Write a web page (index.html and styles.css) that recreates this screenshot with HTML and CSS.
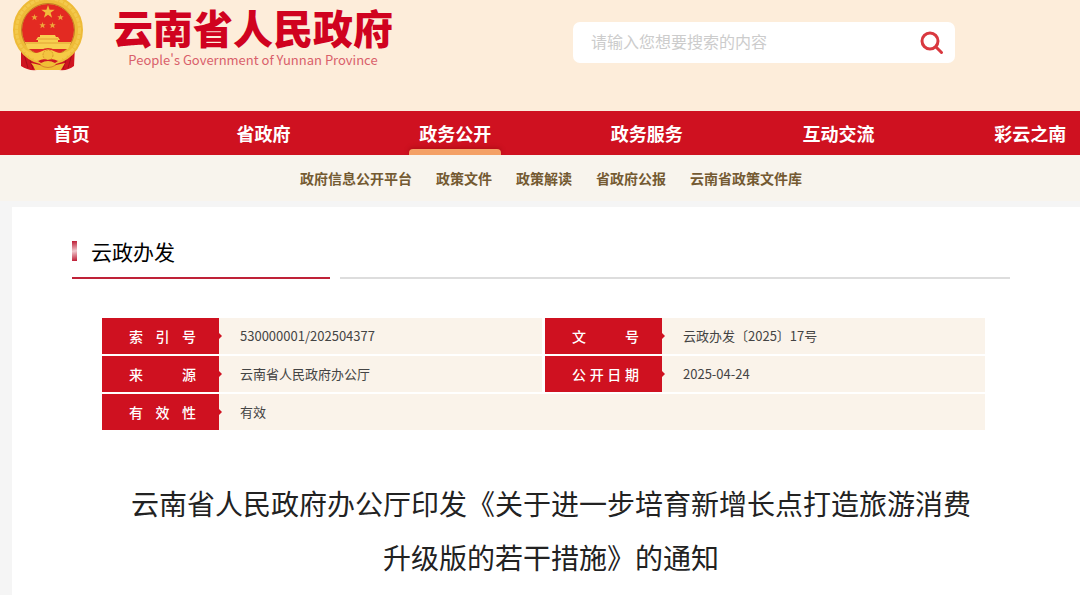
FILE: index.html
```html
<!DOCTYPE html>
<html lang="zh-CN">
<head>
    <meta charset="UTF-8">
    <meta name="viewport" content="width=device-width, initial-scale=1.0">
    <title>云南省人民政府</title>
    <link rel="stylesheet" href="styles.css">
</head>
<body>

<div class="page">
    <header class="header">
        <a class="logo" href="#">
            <svg class="emblem" viewBox="0 0 72 72" aria-hidden="true">
                <path d="M9 46 Q15 54 26 58 L25 70 Q16 71 9 66 Z M63 46 Q57 54 46 58 L47 70 Q56 71 62 66 Z" fill="#cf1420"/>
                <path d="M12 54 L16 68 M60 54 L56 68 M17 57 L21 69 M55 57 L51 69" stroke="#a90f18" stroke-width="1"/>
                <path d="M25 56 H47 V70 H25 Z" fill="#cf1420"/>
                <circle cx="36" cy="30" r="30.500" fill="#e32a22" stroke="#eebb38" stroke-width="9"/>
                <circle cx="36" cy="30" r="31.500" fill="none" stroke="#f5cf55" stroke-width="3" stroke-dasharray="4 1" opacity="0.7"/>
                <circle cx="36" cy="30" r="26.500" fill="none" stroke="#c47a24" stroke-width="1"/>
                <path d="M36 5 L37.600 9.800 L42.700 9.800 L38.600 12.800 L40.100 17.700 L36 14.700 L31.900 17.700 L33.400 12.800 L29.300 9.800 L34.400 9.800 Z" fill="#f2bb3c"/>
                <g fill="#eda53a">
                    <path id="star" d="M22.500 14 L23.300 16.200 L25.700 16.200 L23.900 17.700 L24.500 20.200 L22.500 18.800 L20.400 20.200 L21.100 17.700 L19.300 16.200 L21.700 16.200 Z"/>
                    <use href="#star" x="26"/>
                    <use href="#star" x="8" y="8"/>
                    <use href="#star" x="18" y="8"/>
                </g>
                <path d="M28 35 H43 L44 37 H46 L48 40 H46 V42 H59 Q58 46 56 49 H16 Q14 46 13 42 H26 V40 H24 L26 37 H28 Z" fill="#f8cf50"/>
                <path d="M26 39 H46 M14 43 H58" stroke="#e2a334" stroke-width="1"/>
                <path d="M11 48 Q20 55 28 52 Q36 47 44 52 Q52 55 61 48 Q56 58 45 60 Q36 57 27 60 Q16 58 11 48 Z" fill="#f6ca45"/>
                <path d="M17 49 Q23 53 29 50 Q36 46 43 50 Q49 53 55 49 Z" fill="#dc2a22"/>
                <circle cx="36" cy="55" r="5" fill="#f3c440" stroke="#dc9a2b" stroke-width="1" stroke-dasharray="2 1"/>
                <path d="M19 63 L28 65 Q32 61 36 61 Q40 61 44 65 L53 63 Q50 68 49 70 H23 Q22 66 19 63 Z" fill="#f0bd35"/>
                <path d="M26 61 Q31 58 36 60 Q41 58 46 61 L43 63 Q36 59 29 63 Z" fill="#cf1420"/>
                <path d="M28 65 Q36 70 44 65" fill="none" stroke="#d9822b" stroke-width="1"/>
            </svg>
            <span class="logo-text">
                <span class="logo-name">云南省人民政府</span>
                <span class="logo-en">People's Government of Yunnan Province</span>
            </span>
        </a>
        <form class="search">
            <input class="search-input" type="text" placeholder="请输入您想要搜索的内容" aria-label="搜索">
            <button class="search-btn" type="button" aria-label="搜索">
                <svg viewBox="0 0 24 24" width="24" height="24">
                    <circle cx="10" cy="10" r="8" fill="none" stroke="#d9383f" stroke-width="3"/>
                    <path d="M16 16 L21.500 21.500" stroke="#d9383f" stroke-width="3" stroke-linecap="round"/>
                </svg>
            </button>
        </form>
    </header>

    <nav class="nav">
        <a href="#">首页</a>
        <a href="#">省政府</a>
        <a href="#" class="active">政务公开</a>
        <a href="#">政务服务</a>
        <a href="#">互动交流</a>
        <a href="#">彩云之南</a>
    </nav>

    <nav class="subnav">
        <a href="#">政府信息公开平台</a>
        <a href="#">政策文件</a>
        <a href="#">政策解读</a>
        <a href="#">省政府公报</a>
        <a href="#">云南省政策文件库</a>
    </nav>

    <main class="content">
        <h2 class="section-title">云政办发</h2>
        <div class="section-line"></div>

        <table class="info">
            <tr>
                <th scope="row"><span>索引号</span></th>
                <td>530000001/202504377</td>
                <th scope="row" class="second"><span>文号</span></th>
                <td>云政办发〔2025〕17号</td>
            </tr>
            <tr>
                <th scope="row"><span>来源</span></th>
                <td>云南省人民政府办公厅</td>
                <th scope="row" class="second"><span>公开日期</span></th>
                <td>2025-04-24</td>
            </tr>
            <tr>
                <th scope="row"><span>有效性</span></th>
                <td colspan="3">有效</td>
            </tr>
        </table>

        <h1 class="doc-title">云南省人民政府办公厅印发《关于进一步培育新增长点打造旅游消费升级版的若干措施》的通知</h1>
    </main>
</div>

</body>
</html>
```
FILE: styles.css
```css
body {
    margin: 0;
    overflow-x: hidden;
    background-color: #f5f5f5;
    font-family: "Noto Sans CJK SC", sans-serif;
    color: #222;
}
a {
    text-decoration: none;
}
.page {
    display: flex;
    flex-direction: column;
    min-height: 100vh;
    margin-right: -22px;
}
.header {
    display: flex;
    justify-content: space-between;
    align-items: flex-start;
    box-sizing: border-box;
    height: 111px;
    padding: 0 147px 0 12px;
    background-color: #fdedda;
}
.logo {
    display: flex;
}
.emblem {
    width: 72px;
    height: 72px;
}
.logo-text {
    display: flex;
    flex-direction: column;
    align-items: center;
    padding: 8px 0 0 29px;
}
.logo-name {
    font-size: 40px;
    line-height: 38px;
    font-weight: 900;
    color: #d0021f;
}
.logo-en {
    margin-top: 5px;
    font-size: 13px;
    line-height: 18px;
    color: #d9606a;
}
.search {
    display: flex;
    align-items: center;
    box-sizing: border-box;
    width: 382px;
    height: 41px;
    margin-top: 22px;
    padding: 0 11px 0 18px;
    border-radius: 7px;
    background-color: #fff;
}
.search-input {
    flex: 1;
    min-width: 0;
    height: 24px;
    padding: 0 0 4px;
    border: none;
    outline: none;
    font-family: inherit;
    font-size: 16px;
}
.search-input::placeholder {
    color: #ccc;
}
.search-btn {
    display: flex;
    padding: 0;
    border: none;
    background: none;
    cursor: pointer;
}
.nav {
    display: grid;
    grid-template-columns: repeat(6, 1fr);
    column-gap: 48px;
    justify-items: center;
    background-color: #cf1120;
}
.nav a {
    position: relative;
    padding: 0 10px;
    font-size: 18px;
    line-height: 44px;
    font-weight: bold;
    color: #fff;
}
.nav .active::after {
    content: "";
    position: absolute;
    left: 0;
    right: 0;
    bottom: 0;
    height: 6px;
    border-radius: 4px 4px 0 0;
    background-color: #f4a066;
    box-shadow: 0 -1px 5px rgba(120, 0, 0, 0.4);
    clip-path: inset(-8px -8px 0 -8px);
}
.subnav {
    display: flex;
    justify-content: center;
    gap: 24px;
    background-color: #f8f4ed;
}
.subnav a {
    font-size: 14px;
    line-height: 46px;
    font-weight: bold;
    color: #745a32;
}
.content {
    flex: 1;
    margin: 6px 12px 0;
    padding: 27px 80px 0 60px;
    background-color: #fff;
}
.section-title {
    display: flex;
    align-items: center;
    gap: 14px;
    margin: 0;
    font-size: 21px;
    line-height: 34px;
    font-weight: normal;
    color: #000;
}
.section-title::before {
    content: "";
    width: 5px;
    height: 20px;
    background: linear-gradient(170deg, #bd1730, #f0c9ce 50%, #bd1730);
}
.section-line {
    display: flex;
    gap: 10px;
    margin-top: 9px;
}
.section-line::before {
    content: "";
    width: 258px;
    height: 2px;
    background-color: #bf2238;
}
.section-line::after {
    content: "";
    flex: 1;
    height: 2px;
    background-color: #ddd;
}
.info {
    width: calc(100% - 55px);
    margin: 37px 25px 0 30px;
    table-layout: fixed;
    border-collapse: separate;
    border-spacing: 0 2px;
}
.info th, .info td {
    box-sizing: border-box;
    height: 36px;
    padding: 0;
    line-height: 20px;
}
.info th {
    position: relative;
    width: 117px;
    padding: 0 23px 0 27px;
    background-color: #cf1120;
    background-clip: padding-box;
    font-size: 14px;
    font-weight: 500;
    color: #fff;
}
.info .second {
    width: 120px;
    border-left: 3px solid #fff;
}
.info th span {
    display: block;
    text-align: justify;
    text-align-last: justify;
}
.info th::after {
    content: "";
    position: absolute;
    left: 100%;
    top: 15px;
    border: 3px solid transparent;
    border-left-color: #cf1120;
    border-right: none;
}
.info td {
    padding-left: 21px;
    background-color: #faf3ea;
    font-size: 13px;
    color: #444;
}
.doc-title {
    margin: 44px 30px 0 50px;
    font-size: 28px;
    line-height: 54px;
    font-weight: normal;
    text-align: center;
}
```
